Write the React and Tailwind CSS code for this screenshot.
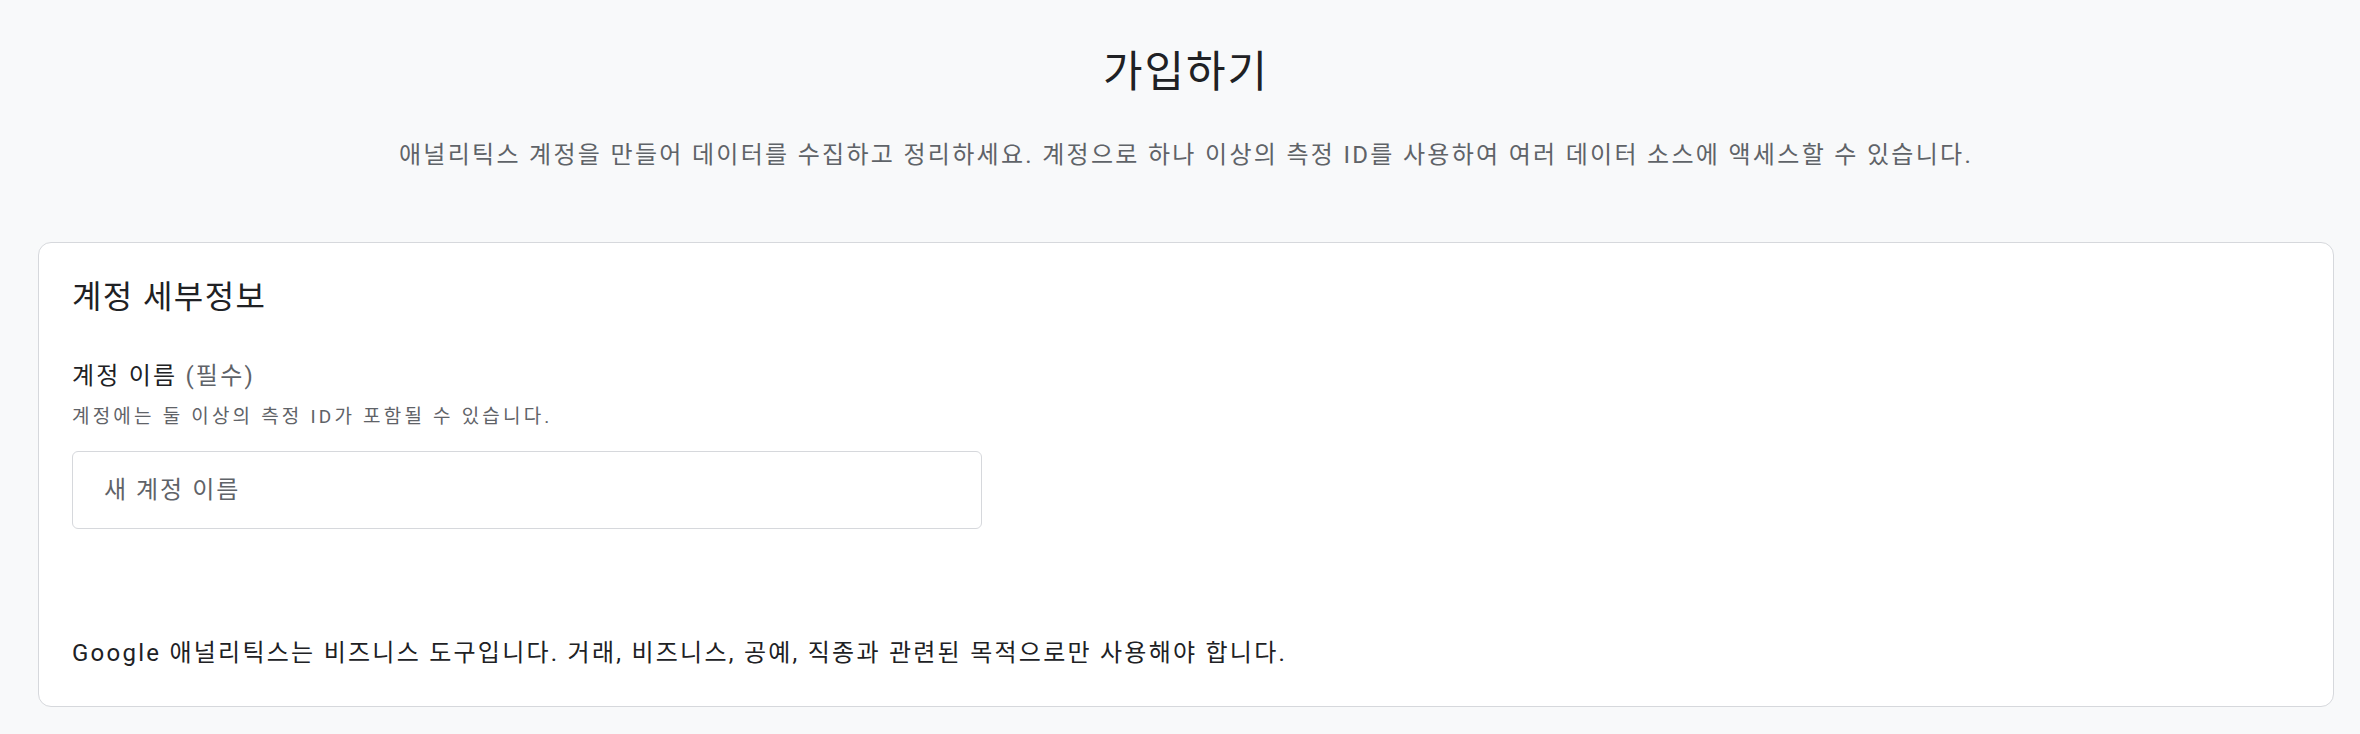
import React from "react";

const font = { fontFamily: 'Roboto, "Noto Sans CJK KR", sans-serif' };

export default function App() {
  return (
    <main
      style={font}
      className="min-h-screen bg-[#f8f9fa] pl-[38px] pr-[26px] pt-[44px] text-[#202124]"
    >
      <header className="flex flex-col items-center">
        <h1 className="text-[43px] leading-[56px] font-normal tracking-[2px]">가입하기</h1>
        <p className="mt-[39px] text-[24px] leading-[32px] tracking-[2.3px] text-[#5f6368]">
          애널리틱스 계정을 만들어 데이터를 수집하고 정리하세요. 계정으로 하나 이상의 측정 ID를 사용하여 여러 데이터 소스에 액세스할 수 있습니다.
        </p>
      </header>

      <section className="mt-[71px] rounded-[13px] border border-[#d6d8dc] bg-white px-[33px] pt-[34px] pb-[37px]">
        <h2 className="text-[32px] leading-[40px] font-normal tracking-[1.4px]">계정 세부정보</h2>

        <label className="mt-[43px] block text-[24px] leading-[32px] tracking-[2.2px]">
          계정 이름 <span className="text-[#5f6368]">(필수)</span>
        </label>
        <p className="mt-[13px] text-[19px] leading-[24px] tracking-[3.2px] text-[#5f6368]">
          계정에는 둘 이상의 측정 ID가 포함될 수 있습니다.
        </p>
        <input
          type="text"
          placeholder="새 계정 이름"
          className="mt-[22px] block h-[78px] w-[910px] rounded-[6px] border border-[#d6d8dc] px-[31px] text-[24px] tracking-[2px] outline-none placeholder:text-[#5f6368]"
        />

        <p className="mt-[108px] text-[24px] leading-[32px] tracking-[2.25px]">
          Google 애널리틱스는 비즈니스 도구입니다. 거래, 비즈니스, 공예, 직종과 관련된 목적으로만 사용해야 합니다.
        </p>
      </section>
    </main>
  );
}
